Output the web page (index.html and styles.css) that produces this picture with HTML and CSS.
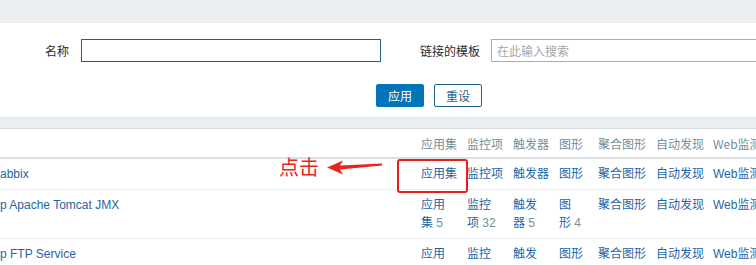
FILE: index.html
```html
<html>
<head>
	<title>模板</title>
	<link rel="stylesheet" href="styles.css">
</head>
<body>
	<div class="topbar"></div>

	<div class="filter">
		<div class="filter-row">
			<label class="lbl lbl-name">名称</label>
			<input class="field field-active" type="text">
			<label class="lbl lbl-tpl">链接的模板</label>
			<input class="field" type="text" placeholder="在此输入搜索">
		</div>
		<div class="filter-buttons">
			<button class="btn">应用</button>
			<button class="btn btn-alt">重设</button>
		</div>
	</div>

	<div class="list">
		<table>
			<colgroup>
				<col width="421">
				<col width="46">
				<col width="46">
				<col width="46">
				<col width="39">
				<col width="58">
				<col width="57">
				<col width="80">
			</colgroup>
			<tr>
				<th></th>
				<th>应用集</th>
				<th>监控项</th>
				<th>触发器</th>
				<th>图形</th>
				<th>聚合图形</th>
				<th>自动发现</th>
				<th>Web监测</th>
			</tr>
			<tr>
				<td><a>abbix</a></td>
				<td><a>应用集</a></td>
				<td><a>监控项</a></td>
				<td><a>触发器</a></td>
				<td><a>图形</a></td>
				<td><a>聚合图形</a></td>
				<td><a>自动发现</a></td>
				<td><a>Web监测</a></td>
			</tr>
			<tr>
				<td><a>p Apache Tomcat JMX</a></td>
				<td><a>应用集</a><span class="count">&nbsp;5</span></td>
				<td><a>监控项</a><span class="count">&nbsp;32</span></td>
				<td><a>触发器</a><span class="count">&nbsp;5</span></td>
				<td><a>图形</a><span class="count">&nbsp;4</span></td>
				<td><a>聚合图形</a></td>
				<td><a>自动发现</a></td>
				<td><a>Web监测</a></td>
			</tr>
			<tr>
				<td><a>p FTP Service</a></td>
				<td><a>应用集</a><span class="count">&nbsp;1</span></td>
				<td><a>监控项</a><span class="count">&nbsp;1</span></td>
				<td><a>触发器</a><span class="count">&nbsp;1</span></td>
				<td><a>图形</a></td>
				<td><a>聚合图形</a></td>
				<td><a>自动发现</a></td>
				<td><a>Web监测</a></td>
			</tr>
		</table>

		<!-- annotation drawn over the list -->
		<div class="note-text">点击</div>
		<svg class="note-arrow" width="56" height="16" viewBox="0 0 56 16">
			<polygon points="0,7.5 16,0.5 13,5.5 55,3.5 55,5.5 13,9.5 16,14.5" fill="#e8261e"/>
		</svg>
		<div class="note-box"></div>
	</div>
</body>
</html>
```

FILE: styles.css
```css
body
{
	margin: 0;
	width: 756px;
	height: 265px;
	overflow: hidden;
	background: #ebeef0;
	font-family: "Liberation Sans", "Noto Sans CJK SC", sans-serif;
	font-size: 12px;
	color: #1f2c33;
}

.topbar
{
	height: 23px;
}

.filter
{
	background: #ffffff;
	height: 95px;
	border-bottom: 1px solid #e4e8ea;
	box-sizing: border-box;
}

.filter-row
{
	display: flex;
	align-items: center;
	padding-top: 16px;
}

.lbl
{
	flex-shrink: 0;
	text-align: right;
	box-sizing: border-box;
	font-family: "Noto Sans CJK SC", sans-serif;
}

.lbl-name
{
	width: 81px;
	padding-right: 12px;
}

.lbl-tpl
{
	width: 110px;
	padding-right: 11px;
}

.field
{
	flex-shrink: 0;
	width: 300px;
	height: 23px;
	box-sizing: border-box;
	border: 1px solid #acacac;
	background: #ffffff;
	padding: 0 5px;
	font-family: "Noto Sans CJK SC", sans-serif;
	font-size: 12px;
	outline: none;
}

.field::placeholder
{
	color: #a6a6a6;
}

.field-active
{
	border-color: #1f5f8c;
}

.filter-buttons
{
	display: flex;
	gap: 10px;
	padding-left: 376px;
	margin-top: 22px;
}

.btn
{
	width: 48px;
	height: 23px;
	border: 1px solid #0275b8;
	border-radius: 2px;
	background: #0275b8;
	color: #ffffff;
	font-family: "Noto Sans CJK SC", sans-serif;
	font-size: 12px;
	padding: 0;
}

.btn-alt
{
	background: #ffffff;
	color: #1f5f8c;
	border-color: #1f5f8c;
}

.list
{
	position: relative;
	margin-top: 10px;
	height: 200px;
	border-top: 1px solid #d9dcde;
	background: #ffffff;
}

table
{
	table-layout: fixed;
	width: 793px;
	margin-left: -5px;
	border-spacing: 0;
	font-size: 12px;
}

th
{
	text-align: left;
	font-weight: normal;
	color: #768d99;
	height: 30px;
	padding: 0 3px 0 5px;
	border-bottom: 2px solid #dcdfe1;
	box-sizing: border-box;
	white-space: nowrap;
	font-family: "Noto Sans CJK SC", sans-serif;
}

td
{
	padding: 6px 3px 6px 5px;
	line-height: 18px;
	vertical-align: top;
	border-bottom: 1px solid #ebeef0;
	font-family: "Liberation Sans", "Noto Sans CJK SC", sans-serif;
}

td a
{
	color: #1f65a6;
}

.count
{
	color: #768d99;
}

.note-text
{
	position: absolute;
	left: 279px;
	top: 28px;
	font-family: "Noto Sans CJK SC", sans-serif;
	font-size: 20px;
	line-height: 20px;
	color: #e8261e;
}

.note-arrow
{
	position: absolute;
	left: 327px;
	top: 31px;
}

.note-box
{
	position: absolute;
	left: 397px;
	top: 30px;
	width: 71px;
	height: 34px;
	box-sizing: border-box;
	border: 2px solid #e3201c;
	border-radius: 3px;
}
```
